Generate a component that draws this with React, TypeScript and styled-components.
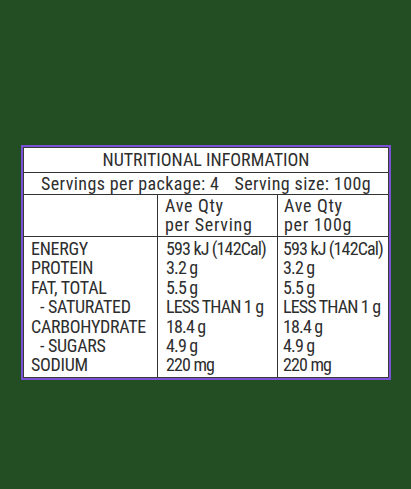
import React from "react";
import styled, { createGlobalStyle } from "styled-components";

const Global = createGlobalStyle`
  html, body { margin: 0; padding: 0; }
  body {
    background: #234d23;
    width: 411px;
    height: 489px;
    overflow: hidden;
  }
`;

const Page = styled.div`
  width: 411px;
  height: 489px;
  box-sizing: border-box;
  padding: 145px 0 0 21px;
  font-family: "Roboto Condensed", "DejaVu Sans Condensed", "Liberation Sans Narrow", Roboto, sans-serif;
  color: #2e2e2e;
`;

const Frame = styled.div`
  width: 370px;
  box-sizing: border-box;
  border: 2px solid #7b52d6;
`;

const Table = styled.div`
  background: #fff;
  border: 1px solid #3a3a3a;
  display: grid;
  grid-template-columns: 134px 120px 1fr;
  grid-template-rows: 25px 22px 42px 140px;
`;

const Banner = styled.div<{ $h: number; $ls?: number }>`
  grid-column: 1 / -1;
  border-bottom: 1px solid #333;
  display: flex;
  align-items: center;
  justify-content: center;
  gap: 15px;
  font-size: 18px;
  font-weight: 400;
  letter-spacing: ${(p) => p.$ls ?? 0}px;
  line-height: ${(p) => p.$h}px;
  white-space: pre;
`;

const Cell = styled.div<{ $pad: number; $last?: boolean; $bottom?: boolean }>`
  box-sizing: border-box;
  padding-left: ${(p) => p.$pad}px;
  border-right: ${(p) => (p.$last ? "none" : "1px solid #333")};
  border-bottom: ${(p) => (p.$bottom ? "1px solid #333" : "none")};
  font-size: 18px;
  font-weight: 400;
  line-height: 19.4px;
  white-space: pre;
  overflow: hidden;
`;

const HeadCell = styled(Cell)`
  padding-top: 1px;
  line-height: 19px;
  letter-spacing: 0.7px;
`;

const DataCell = styled(Cell)<{ $tight?: boolean }>`
  padding-top: 2px;
  letter-spacing: ${(p) => (p.$tight ? -0.85 : -0.3)}px;
  word-spacing: ${(p) => (p.$tight ? 0 : 0)}px;
`;

const Line = styled.div<{ $indent?: boolean }>`
  padding-left: ${(p) => (p.$indent ? 9 : 0)}px;
`;

const rows: [string, string, boolean?][] = [
  ["ENERGY", "593 kJ (142Cal)"],
  ["PROTEIN", "3.2 g"],
  ["FAT, TOTAL", "5.5 g"],
  ["- SATURATED", "LESS THAN 1 g", true],
  ["CARBOHYDRATE", "18.4 g"],
  ["- SUGARS", "4.9 g", true],
  ["SODIUM", "220 mg"],
];

export default function App() {
  return (
    <Page>
      <Global />
      <Frame>
        <Table>
          <Banner $h={24}>NUTRITIONAL INFORMATION</Banner>
          <Banner $h={21} $ls={0.4}>
            <span>Servings per package: 4</span>
            <span>Serving size: 100g</span>
          </Banner>
          <HeadCell $pad={7} $bottom />
          <HeadCell $pad={7} $bottom>
            <Line>Ave Qty</Line>
            <Line>per Serving</Line>
          </HeadCell>
          <HeadCell $pad={6} $bottom $last>
            <Line>Ave Qty</Line>
            <Line>per 100g</Line>
          </HeadCell>
          <DataCell $pad={7}>
            {rows.map(([n, , ind]) => (
              <Line key={n} $indent={ind}>{n}</Line>
            ))}
          </DataCell>
          <DataCell $pad={8} $tight>
            {rows.map(([n, v]) => (
              <Line key={n}>{v}</Line>
            ))}
          </DataCell>
          <DataCell $pad={5} $last $tight>
            {rows.map(([n, v]) => (
              <Line key={n}>{v}</Line>
            ))}
          </DataCell>
        </Table>
      </Frame>
    </Page>
  );
}
